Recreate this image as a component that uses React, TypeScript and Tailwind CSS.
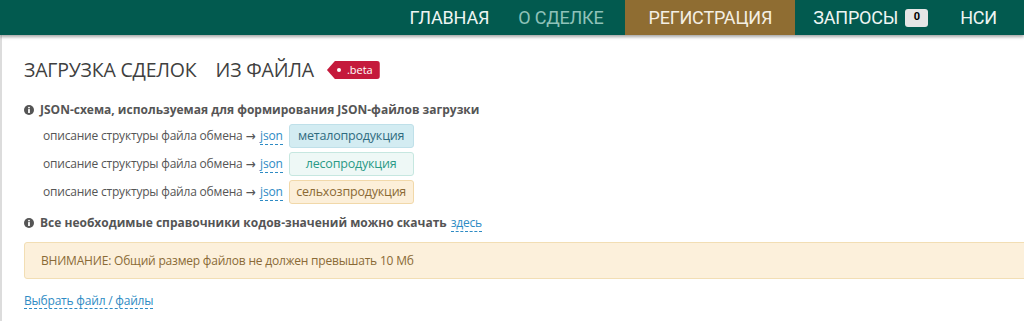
import React from "react";

const navItems = [
  { label: "ГЛАВНАЯ", cls: "text-[#eef5f3] pl-[14px] pr-[14px]" },
  { label: "О СДЕЛКЕ", cls: "text-[#8fc2b9] pl-[15px] pr-[22px]" },
  { label: "РЕГИСТРАЦИЯ", cls: "bg-[#8f6d32] text-[#f4efe4] px-[23px]" },
  { label: "ЗАПРОСЫ", cls: "text-[#eef5f3] pl-[18px] pr-[16px]", count: 0 },
  { label: "НСИ", cls: "text-[#eef5f3] pl-[16px] pr-[21px]" },
];

const products = [
  { label: "металопродукция", cls: "bg-[#d3ecf2] border-[#bfe0e9] text-[#2f6b80]" },
  { label: "лесопродукция", cls: "bg-[#eef8f6] border-[#c6e7e0] text-[#2a9a86]" },
  { label: "сельхозпродукция", cls: "bg-[#fcefd9] border-[#f1d8a9] text-[#8b6a35]" },
];

function InfoIcon() {
  return (
    <svg width="10" height="10" viewBox="0 0 10 10" className="shrink-0">
      <circle cx="5" cy="5" r="5" fill="#555" />
      <circle cx="5" cy="2.6" r="0.95" fill="#fff" />
      <rect x="4.1" y="4.1" width="1.8" height="4" rx="0.3" fill="#fff" />
    </svg>
  );
}

function DashLink({ children }: { children: React.ReactNode }) {
  return (
    <a href="#" className="text-[#2e8bc4] border-b border-dashed border-[#2e8bc4] leading-[15px]">
      {children}
    </a>
  );
}

export default function App() {
  return (
    <div className="w-[1024px] h-[321px] overflow-hidden bg-white font-['Open_Sans',sans-serif]">
      <header className="relative z-10 h-[35px] bg-[#025a4f] flex justify-end pr-[6px] shadow-[0_2px_3px_rgba(0,0,0,0.35)]">
        {navItems.map((item) => (
          <a
            key={item.label}
            href="#"
            className={`flex items-center gap-[7px] text-[18px] font-['Roboto',sans-serif] tracking-[-0.2px] ${item.cls}`}
          >
            {item.label}
            {item.count !== undefined && (
              <span className="h-[18px] min-w-[23px] px-[6px] rounded-[3px] bg-[#e6e6e6] text-black text-[11px] font-bold flex items-center justify-center">
                {item.count}
              </span>
            )}
          </a>
        ))}
      </header>

      <main className="h-[286px] border-l-2 border-[#dcdcdc] pl-[22px] pt-[21px] text-[12px] tracking-[-0.2px] text-[#555]">
        <div className="flex items-center h-[28px]">
          <h1 className="text-[19.5px] text-[#3f3f3f] tracking-[-0.2px]">
            ЗАГРУЗКА СДЕЛОК<span className="ml-[19px]">ИЗ ФАЙЛА</span>
          </h1>
          <span className="ml-[13px] h-[18px] pl-[10px] pr-[7px] flex items-center gap-[6px] bg-[#c51a3c] text-white text-[11px] tracking-normal rounded-r-[3px] [clip-path:polygon(8px_0,100%_0,100%_100%,8px_100%,0_50%)]">
            <span className="w-[4px] h-[4px] rounded-full bg-white" />
            .beta
          </span>
        </div>

        <div className="mt-[16px] flex items-center gap-[6px] h-[20px] font-bold tracking-normal">
          <InfoIcon />
          <span>JSON-схема, используемая для формирования JSON-файлов загрузки</span>
        </div>

        <div className="mt-[2px] pl-[19px]">
          {products.map((p) => (
            <div key={p.label} className="h-[28px] flex items-center">
              <span>описание структуры файла обмена</span>
              <span className="ml-[2px] text-[14px] leading-none font-['DejaVu_Sans',sans-serif] scale-x-[0.85]">→</span>
              <span className="ml-[4px]">
                <DashLink>json</DashLink>
              </span>
              <span
                className={`ml-[6px] w-[125px] h-[24px] border rounded-[3px] flex items-center justify-center text-[12.5px] ${p.cls}`}
              >
                {p.label}
              </span>
            </div>
          ))}
        </div>

        <div className="mt-[7px] flex items-center gap-[6px] h-[20px]">
          <InfoIcon />
          <span className="font-bold tracking-normal">Все необходимые справочники кодов-значений можно скачать</span>
          <span className="-ml-[2px]">
            <DashLink>здесь</DashLink>
          </span>
        </div>

        <div className="mt-[9px] -mr-[6px] h-[37px] flex items-center pl-[16px] bg-[#fcf0db] border border-[#f2deb4] rounded-[3px] text-[#8a6a36]">
          ВНИМАНИЕ: Общий размер файлов не должен превышать 10 Мб
        </div>

        <div className="mt-[12px] h-[20px] flex items-center">
          <DashLink>Выбрать файл / файлы</DashLink>
        </div>
      </main>
    </div>
  );
}
